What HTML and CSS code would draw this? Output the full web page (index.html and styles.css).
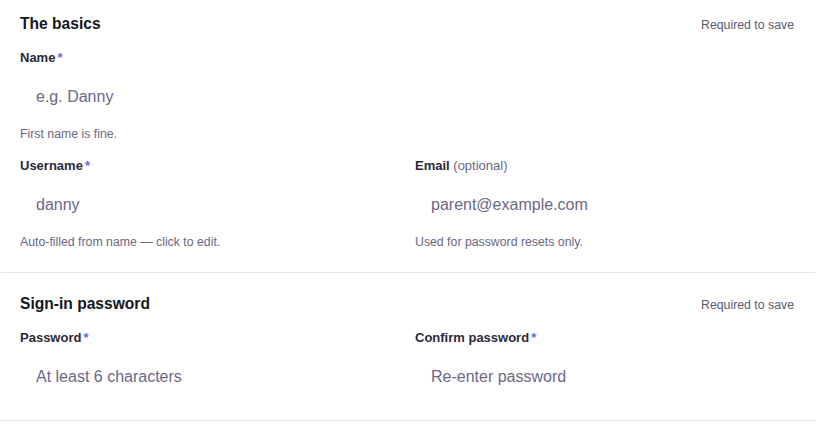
FILE: index.html
```html
<!DOCTYPE html>
<html lang="en">
<head>
<meta charset="utf-8">
<title>Account setup</title>
<link rel="stylesheet" href="styles.css">
</head>
<body>
<div class="page">
  <section class="section first">
    <div class="section-head">
      <h2 class="section-title">The basics</h2>
      <span class="section-note">Required to save</span>
    </div>
    <div class="fields">
      <div class="field">
        <label class="label">Name<span class="req">*</span></label>
        <input class="input" type="text" placeholder="e.g. Danny">
        <p class="help">First name is fine.</p>
      </div>
      <div class="grid">
        <div class="field">
          <label class="label">Username<span class="req">*</span></label>
          <input class="input" type="text" placeholder="danny">
          <p class="help">Auto-filled from name — click to edit.</p>
        </div>
        <div class="field">
          <label class="label">Email <span class="opt">(optional)</span></label>
          <input class="input" type="email" placeholder="parent@example.com">
          <p class="help">Used for password resets only.</p>
        </div>
      </div>
    </div>
  </section>
  <section class="section last">
    <div class="section-head">
      <h2 class="section-title">Sign-in password</h2>
      <span class="section-note">Required to save</span>
    </div>
    <div class="fields">
      <div class="grid">
        <div class="field">
          <label class="label">Password<span class="req">*</span></label>
          <input class="input" type="password" placeholder="At least 6 characters">
        </div>
        <div class="field">
          <label class="label">Confirm password<span class="req">*</span></label>
          <input class="input" type="password" placeholder="Re-enter password">
        </div>
      </div>
    </div>
  </section>
</div>
</body>
</html>
```

FILE: styles.css
```css
* { box-sizing: border-box; }

html, body {
  margin: 0;
  padding: 0;
  background: #ffffff;
}

body {
  font-family: "Liberation Sans", Arial, Helvetica, sans-serif;
  color: #24222f;
}

.page {
  width: 814px;
  margin-left: 1px;
}

.section {
  padding: 20px 21px 22px 19px;
  border-bottom: 1px solid #e7e5f1;
}

.section.first {
  padding-top: 13px;
}

.section.last {
  padding-bottom: 21px;
}

.section-head {
  display: flex;
  align-items: center;
  justify-content: space-between;
  height: 22px;
  margin-bottom: 14px;
}

.section-title {
  margin: 0;
  font-size: 15.6px;
  line-height: 22px;
  font-weight: 700;
  color: #16151e;
}

.section-note {
  font-size: 12.3px;
  line-height: 16px;
  color: #5b5874;
  padding-top: 2px;
}

.fields {
  display: flex;
  flex-direction: column;
  gap: 15px;
}

.grid {
  display: grid;
  grid-template-columns: 1fr 1fr;
  column-gap: 16px;
}

.field {
  display: flex;
  flex-direction: column;
}

.label {
  font-size: 13px;
  line-height: 18px;
  font-weight: 700;
  color: #2b2938;
  margin-bottom: 7px;
}

.req {
  color: #7b5cf2;
  margin-left: 2px;
  font-weight: 700;
}

.opt {
  font-weight: 400;
  color: #6a6781;
}

.input {
  display: block;
  width: 100%;
  height: 45px;
  border: none;
  outline: none;
  background: transparent;
  padding: 0 16px;
  font-family: "Liberation Sans", Arial, Helvetica, sans-serif;
  font-size: 16px;
  color: #2b2938;
}

.input::placeholder {
  color: #6c6885;
  opacity: 1;
}

.help {
  margin: 7px 0 0;
  font-size: 12.3px;
  line-height: 16px;
  color: #6b6880;
}
```
